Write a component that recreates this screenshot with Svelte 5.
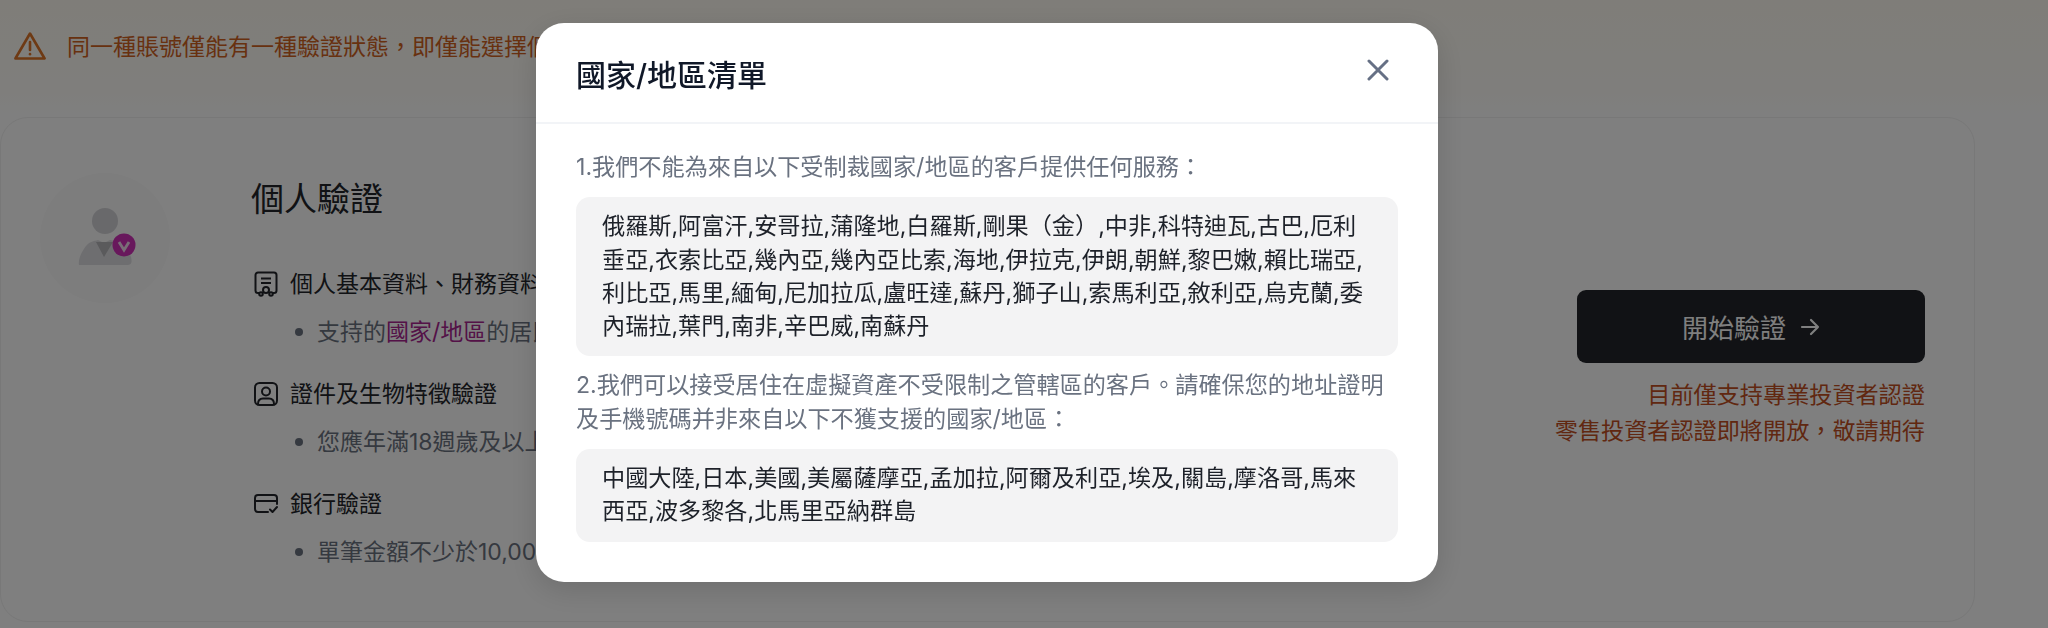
<script>
  const sections = [
    { icon: 'doc', title: '個人基本資料、財務資料', before: '支持的', link: '國家/地區', after: '的居民' },
    { icon: 'id', title: '證件及生物特徵驗證', before: '您應年滿18週歲及以上', link: '', after: '' },
    { icon: 'bank', title: '銀行驗證', before: '單筆金額不少於10,000', link: '', after: '' }
  ];
</script>

<div class="page">
  <div class="banner">
    <svg class="warn" viewBox="0 0 32 28" fill="none" stroke="currentColor" stroke-width="2.600" stroke-linejoin="round" stroke-linecap="round">
      <path d="M16 1.500 L30.600 26.500 H1.400 Z" />
      <path d="M16 10 V18" />
      <path d="M16 22 V22.200" />
    </svg>
    <span>同一種賬號僅能有一種驗證狀態&#xFF0C;即僅能選擇個人</span>
  </div>

  <div class="card">
    <div class="avatar">
      <svg viewBox="0 0 130 130" width="130" height="130">
        <circle cx="65" cy="48" r="13" fill="#d2d2d6" />
        <path d="M39 92 C38 86 42 78 46 73 C49 69 54 68 58 67 L64 70 L70 67 C76 68 82 69 86 73 L91 84 C92 88 92 92 88 92 H43 C41 92 39.500 92 39 92 Z" fill="#dcdce0" />
        <path d="M56 69 H73 L64 84 Z" fill="#b4b4b8" />
        <circle cx="84" cy="72" r="11.500" fill="#d030b8" />
        <path d="M79 69 L84 77 L89 69" fill="none" stroke="#f3dcef" stroke-width="2.800" />
      </svg>
    </div>

    <div class="info">
      <h2>個人驗證</h2>
      {#each sections as s}
        <div class="section">
          <div class="row">
            {#if s.icon === 'doc'}
              <svg class="ico" viewBox="0 0 24 26" fill="none" stroke="currentColor" stroke-width="2">
                <path d="M6 22 H4 A2.500 2.500 0 0 1 1.500 19.500 V4 A2.500 2.500 0 0 1 4 1.500 H20 A2.500 2.500 0 0 1 22.500 4 V19.500 A2.500 2.500 0 0 1 20 22 H18" />
                <path d="M7 7.500 H17 M7 12 H17" />
                <circle cx="12" cy="19" r="3" />
                <circle cx="7" cy="23" r="1.800" />
                <circle cx="17" cy="23" r="1.800" />
              </svg>
            {:else if s.icon === 'id'}
              <svg class="ico" viewBox="0 0 24 24" fill="none" stroke="currentColor" stroke-width="2">
                <rect x="1" y="1" width="22" height="22" rx="4.500" />
                <circle cx="12" cy="9.500" r="4" />
                <path d="M4 22 C4 18 6 16.500 9 16.500 H15 C18 16.500 20 18 20 22" />
              </svg>
            {:else}
              <svg class="ico" viewBox="0 0 24 20" fill="none" stroke="currentColor" stroke-width="2" stroke-linecap="round" stroke-linejoin="round">
                <path d="M14 18 H4 A3 3 0 0 1 1 15 V4 A3 3 0 0 1 4 1 H20 A3 3 0 0 1 23 4 V10" />
                <path d="M1 7 H23" />
                <path d="M16 15.500 L18.500 18 L23 13" />
              </svg>
            {/if}
            <span>{s.title}</span>
          </div>
          <div class="sub">
            <i class="dot"></i>
            <span>{s.before}{#if s.link}<a href="#list">{s.link}</a>{/if}{s.after}</span>
          </div>
        </div>
      {/each}
    </div>

    <div class="action">
      <button class="start">
        <span>開始驗證</span>
        <svg viewBox="0 0 20 18" width="20" height="18" fill="none" stroke="currentColor" stroke-width="2.200" stroke-linecap="round" stroke-linejoin="round">
          <path d="M2 9 H18 M11 2 L18 9 L11 16" />
        </svg>
      </button>
      <p class="note">目前僅支持專業投資者認證<br />零售投資者認證即將開放&#xFF0C;敬請期待</p>
    </div>
  </div>
</div>

<div class="overlay">
  <div class="modal">
    <header>
      <h3>國家/地區清單</h3>
      <button class="close" aria-label="close">
        <svg viewBox="0 0 22 22" width="22" height="22" fill="none" stroke="currentColor" stroke-width="3" stroke-linecap="round">
          <path d="M2 2 L20 20 M20 2 L2 20" />
        </svg>
      </button>
    </header>
    <div class="body">
      <p>1.我們不能為來自以下受制裁國家/地區的客戶提供任何服務&#xFF1A;</p>
      <div class="list">俄羅斯,阿富汗,安哥拉,蒲隆地,白羅斯,剛果&#xFF08;金&#xFF09;,中非,科特迪瓦,古巴,厄利垂亞,衣索比亞,幾內亞,幾內亞比索,海地,伊拉克,伊朗,朝鮮,黎巴嫩,賴比瑞亞,利比亞,馬里,緬甸,尼加拉瓜,盧旺達,蘇丹,獅子山,索馬利亞,敘利亞,烏克蘭,委內瑞拉,葉門,南非,辛巴威,南蘇丹</div>
      <p>2.我們可以接受居住在虛擬資產不受限制之管轄區的客戶。請確保您的地址證明及手機號碼并非來自以下不獲支援的國家/地區&#xFF1A;</p>
      <div class="list">中國大陸,日本,美國,美屬薩摩亞,孟加拉,阿爾及利亞,埃及,關島,摩洛哥,馬來西亞,波多黎各,北馬里亞納群島</div>
    </div>
  </div>
</div>

<style>
  :global(body) {
    margin: 0;
    background: #fff;
    overflow: hidden;
  }

  .page {
    width: 2048px;
    height: 628px;
    font-family: Inter, "Noto Sans CJK TC", sans-serif;
    color: #22252a;
    background: #fff;
    overflow: hidden;
  }

  .banner {
    height: 117px;
    box-sizing: border-box;
    padding: 32px 0 0 14px;
    display: flex;
    align-items: flex-start;
    gap: 21px;
    font-size: 23px;
    line-height: 30px;
    color: #d0621f;
    background: linear-gradient(#fffbf2, #fffdf9 80%, #fff);
  }

  .warn {
    width: 32px;
    height: 28px;
    color: #dc7428;
    flex: none;
  }

  .card {
    width: 1975px;
    height: 505px;
    box-sizing: border-box;
    display: flex;
    align-items: flex-start;
    border: 1px solid #f0f0f0;
    border-radius: 28px;
  }

  .avatar {
    width: 130px;
    height: 130px;
    margin: 55px 0 0 39px;
    border-radius: 50%;
    background: #fafafa;
    flex: none;
  }

  .info {
    margin: 59px 0 0 81px;
    display: flex;
    flex-direction: column;
    gap: 28px;
  }

  h2 {
    margin: 0 0 18px;
    font-size: 33px;
    line-height: 44px;
    font-weight: 400;
    color: #22252a;
  }

  .section {
    display: flex;
    flex-direction: column;
    gap: 14px;
  }

  .row,
  .sub {
    display: flex;
    align-items: center;
    font-size: 23px;
    line-height: 34px;
  }

  .row {
    gap: 12px;
    padding-left: 3px;
  }

  .ico {
    width: 24px;
    height: 26px;
    flex: none;
    color: #22252a;
  }

  .sub {
    padding-left: 44px;
    gap: 14px;
    color: #6b7280;
  }

  .dot {
    width: 8px;
    height: 8px;
    border-radius: 50%;
    background: #6b7280;
  }

  .sub a {
    color: #a8248f;
    text-decoration: none;
  }

  .action {
    align-self: center;
    margin-left: auto;
    padding-right: 49px;
    display: flex;
    flex-direction: column;
    align-items: flex-end;
  }

  .start {
    width: 348px;
    height: 73px;
    display: flex;
    align-items: center;
    justify-content: center;
    gap: 14px;
    border: 0;
    border-radius: 9px;
    background: #22252a;
    color: #fff;
    font: inherit;
    font-size: 26px;
  }

  .note {
    margin: 14px 0 0;
    text-align: right;
    font-size: 23.150px;
    line-height: 36px;
    color: #c24f22;
  }

  .overlay {
    position: fixed;
    inset: 0;
    background: rgba(0, 0, 0, 0.5);
  }

  .modal {
    position: absolute;
    left: 536px;
    top: 23px;
    width: 902px;
    height: 559px;
    box-sizing: border-box;
    border-radius: 28px;
    background: #fff;
    font-family: Inter, "Noto Sans CJK TC", sans-serif;
    box-shadow: 0 8px 30px rgba(0, 0, 0, 0.14);
  }

  header {
    height: 101px;
    box-sizing: border-box;
    padding: 0 40px;
    display: flex;
    align-items: center;
    justify-content: space-between;
    border-bottom: 2px solid #f2f4f7;
  }

  h3 {
    margin: 0;
    font-size: 30px;
    font-weight: 500;
    color: #101828;
  }

  .close {
    margin: -6px 9px 0 0;
    padding: 0;
    border: 0;
    background: none;
    color: #667085;
    display: flex;
  }

  .body {
    padding: 27px 40px 0;
    font-size: 23.150px;
    line-height: 33.300px;
  }

  .body p {
    margin: 0;
    color: #6a7280;
  }

  .list {
    margin: 13px 0 13px;
    padding: 13px 26px;
    border-radius: 14px;
    background: #f3f3f4;
    color: #1d2129;
  }
</style>
